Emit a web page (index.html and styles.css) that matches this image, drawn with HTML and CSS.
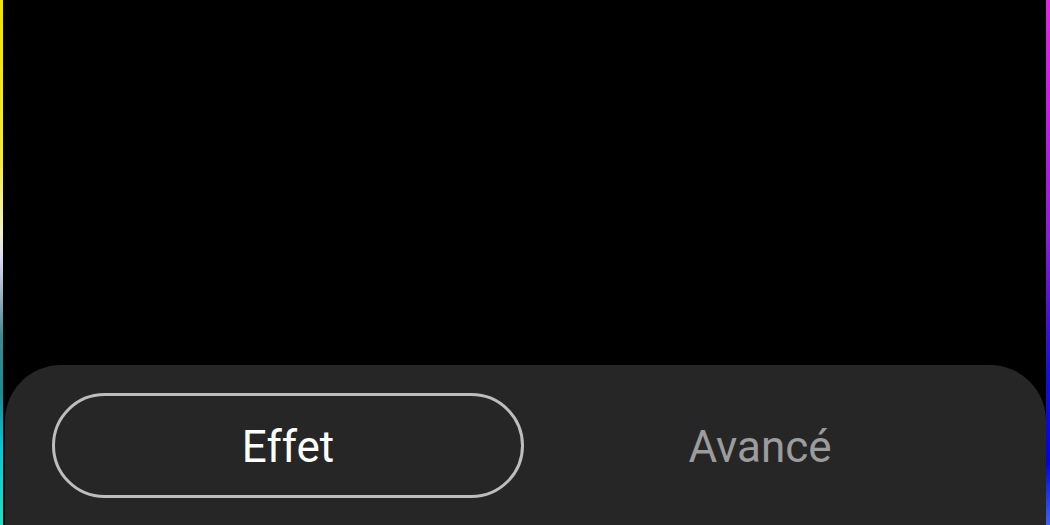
FILE: index.html
```html
<!DOCTYPE html>
<html lang="fr">
<head>
  <meta charset="UTF-8" />
  <meta name="viewport" content="width=device-width, initial-scale=1.0" />
  <title>Effet</title>
  <link rel="stylesheet" href="styles.css">
</head>
<body>
  <div class="edge edge--left"></div>

  <main class="screen">
    <div class="preview"></div>

    <div class="sheet">
      <div class="tabs">
        <button class="tab tab--active">Effet</button>
        <button class="tab">Avancé</button>
      </div>
    </div>
  </main>

  <div class="edge edge--right"></div>
</body>
</html>
```

FILE: styles.css
```css
* {
  margin: 0;
  padding: 0;
  box-sizing: border-box;
}

html,
body {
  height: 100%;
}

body {
  display: flex;
  background-color: #000;
  overflow: hidden;
  font-family: Roboto, "Noto Sans", sans-serif;
}

.edge {
  width: 3px;
  flex-shrink: 0;
}

.edge--left {
  background: linear-gradient(
    to bottom,
    #f2e300 0%,
    #f4ea3a 30%,
    #f3f1c8 44%,
    #dcdcf4 49%,
    #9fb2c4 56%,
    #3f8a8c 64%,
    #1e8a92 75%,
    #07c6d6 85%,
    #1fe0c4 100%
  );
}

.edge--right {
  width: 4px;
  background: linear-gradient(
    to bottom,
    #e326e6 0%,
    #c41ee2 22%,
    #8f1ed6 45%,
    #4a12d2 60%,
    #1410d4 72%,
    #0004e0 88%,
    #3e62f2 100%
  );
}

.screen {
  flex: 1;
  display: flex;
  flex-direction: column;
  padding: 0 0 0 2px;
}

.preview {
  height: 365px;
  flex-shrink: 0;
}

.sheet {
  flex: 1;
  background-color: #262626;
  border-radius: 56px 56px 0 0;
  padding: 28px 50px 0 47px;
}

.tabs {
  display: flex;
}

.tab {
  flex: 1;
  height: 105px;
  border: 3px solid transparent;
  border-radius: 60px;
  background: none;
  font-family: Roboto, "Noto Sans", sans-serif;
  font-size: 44px;
  color: #9c9c9c;
  padding-top: 2px;
}

.tab--active {
  border-color: #bdbdbd;
  color: #fff;
}
```
